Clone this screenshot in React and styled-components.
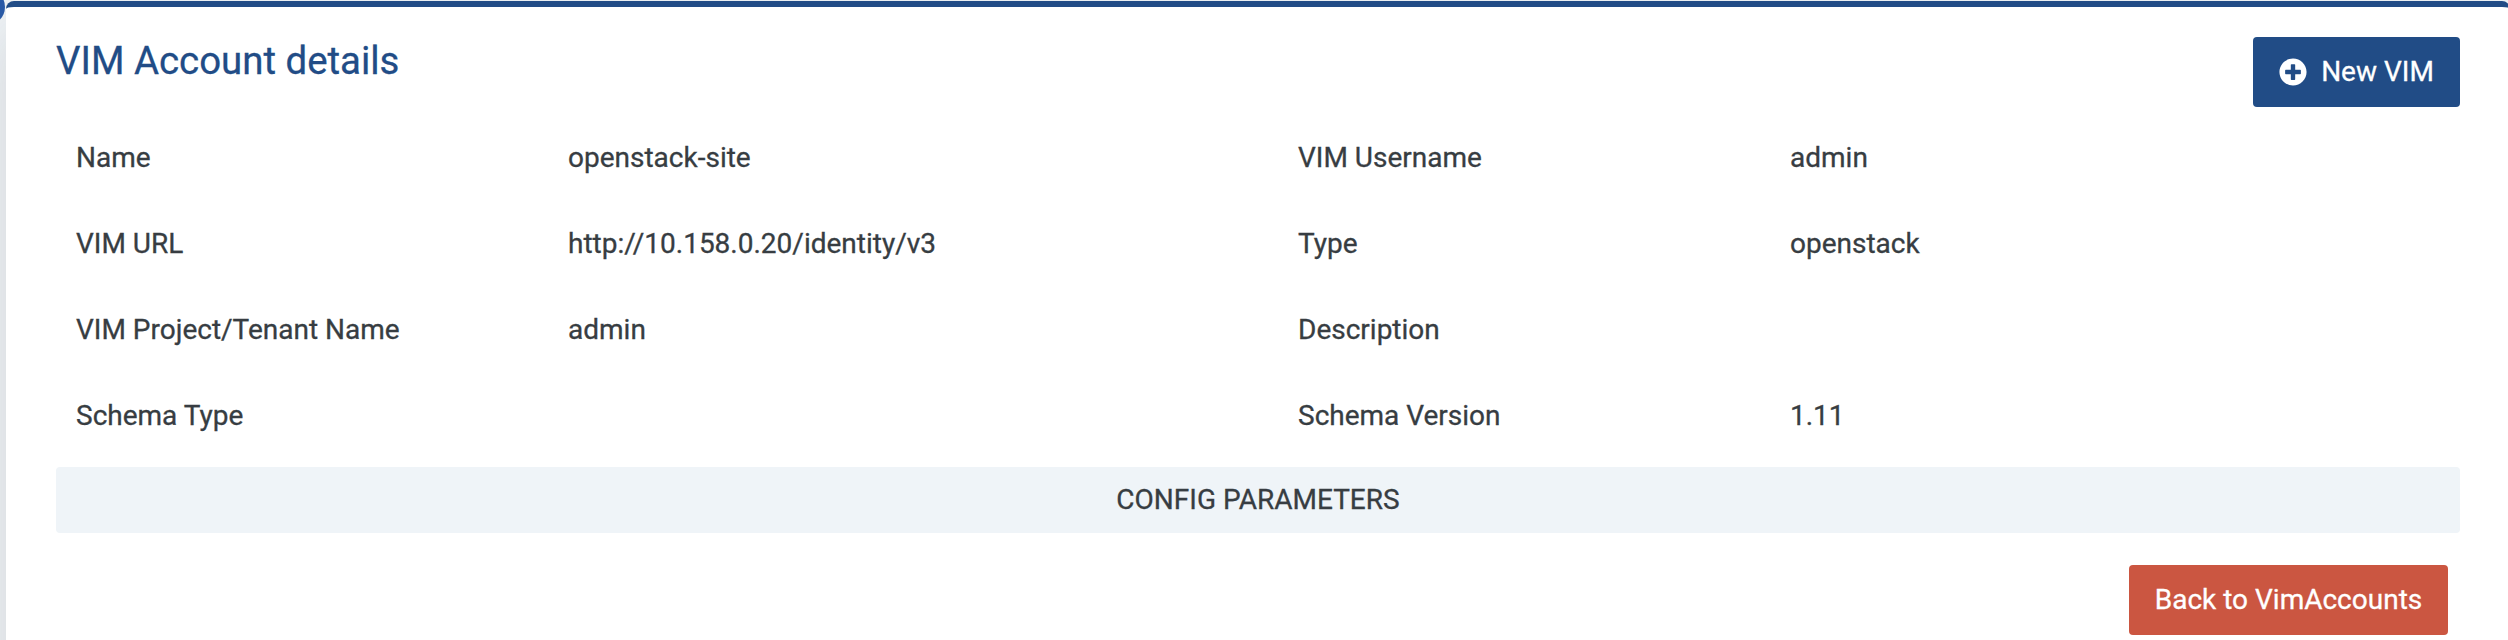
import React from "react";
import styled, { createGlobalStyle } from "styled-components";
import { FaPlusCircle } from "react-icons/fa";

const GlobalStyle = createGlobalStyle`
  * { box-sizing: border-box; }
  body {
    margin: 0;
    background: #eff3f6;
    color: #373d42;
    font-family: Roboto, "Liberation Sans", sans-serif;
    font-size: 28px;
    line-height: 42px;
    -webkit-text-stroke: 0.3px currentColor;
  }
`;

const Page = styled.main`
  position: relative;
  height: 640px;
  padding: 1px 0 0 6px;
  overflow: hidden;
`;

const ToggleDot = styled.span`
  position: absolute;
  top: -11px;
  left: -31px;
  width: 36px;
  height: 36px;
  border-radius: 50%;
  background: #2a5ba8;
`;

const Card = styled.section`
  position: relative;
  width: 2504px;
  height: 700px;
  padding: 30px 50px;
  border-top: 6px solid #214c86;
  border-radius: 8px;
  background: #fff;
  box-shadow: 0 30px 60px rgba(55, 61, 66, 0.16);
`;

const Header = styled.header`
  display: flex;
  justify-content: space-between;
  align-items: flex-start;
  height: 78px;
`;

const Title = styled.h1`
  margin: 0;
  color: #214c86;
  font-size: 38.4px;
  font-weight: 400;
  line-height: 48px;
`;

const Button = styled.button`
  display: flex;
  align-items: center;
  justify-content: center;
  gap: 14px;
  width: ${(p) => p.$width}px;
  height: 70px;
  padding: 0;
  border: 0;
  border-radius: 4px;
  background: ${(p) => p.$color};
  color: #fff;
  font: inherit;
`;

const Details = styled.dl`
  display: grid;
  grid-template-columns: 492px 730px 492px 1fr;
  grid-auto-rows: 86px;
  align-items: center;
  margin: 0 0 8px;
  padding-left: 20px;
`;

const Label = styled.dt``;

const Value = styled.dd`
  margin: 0;
`;

const SectionBar = styled.div`
  display: flex;
  align-items: center;
  justify-content: center;
  height: 66px;
  border-radius: 4px;
  background: #eff4f8;
`;

const Footer = styled.footer`
  display: flex;
  justify-content: flex-end;
  padding: 32px 12px 0 0;
`;

const fields = [
  ["Name", "openstack-site"],
  ["VIM Username", "admin"],
  ["VIM URL", "http://10.158.0.20/identity/v3"],
  ["Type", "openstack"],
  ["VIM Project/Tenant Name", "admin"],
  ["Description", ""],
  ["Schema Type", ""],
  ["Schema Version", "1.11"],
];

export default function App() {
  return (
    <Page>
      <GlobalStyle />
      <ToggleDot />
      <Card>
        <Header>
          <Title>VIM Account details</Title>
          <Button $width={207} $color="#214c86">
            <FaPlusCircle size={28} />
            New VIM
          </Button>
        </Header>
        <Details>
          {fields.map(([label, value]) => (
            <React.Fragment key={label}>
              <Label>{label}</Label>
              <Value>{value}</Value>
            </React.Fragment>
          ))}
        </Details>
        <SectionBar>CONFIG PARAMETERS</SectionBar>
        <Footer>
          <Button $width={319} $color="#cb5641">Back to VimAccounts</Button>
        </Footer>
      </Card>
    </Page>
  );
}
